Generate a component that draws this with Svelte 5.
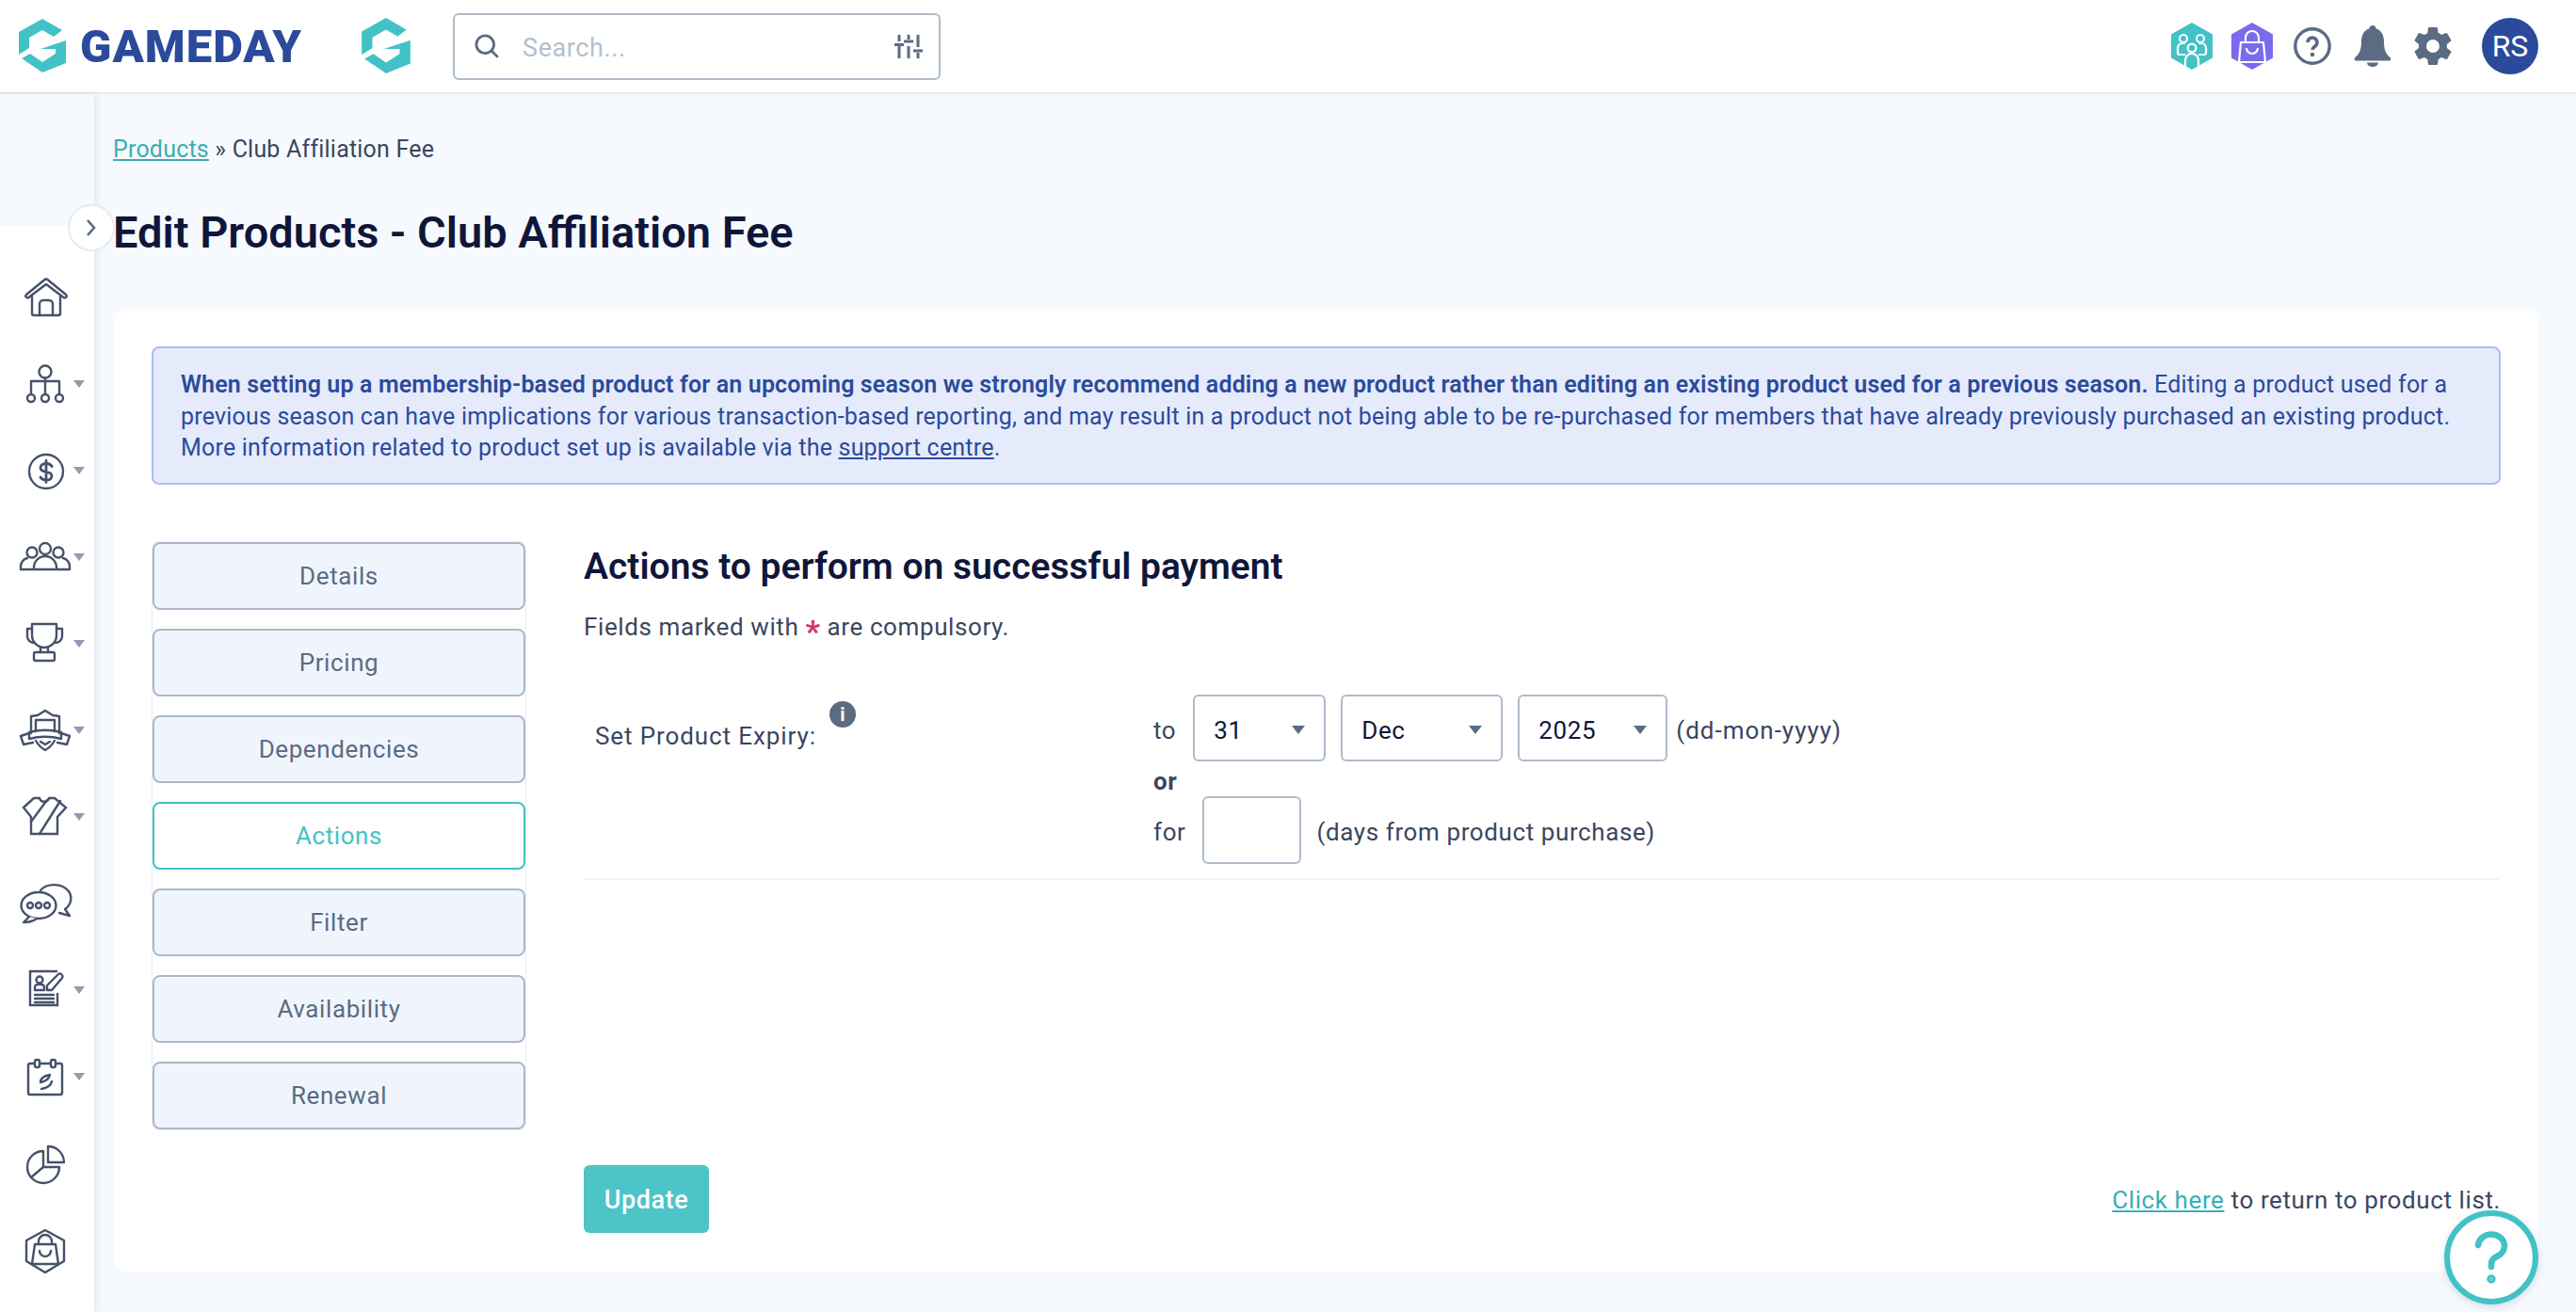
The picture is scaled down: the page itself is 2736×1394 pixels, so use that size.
<script>
  const tabs = ["Details", "Pricing", "Dependencies", "Actions", "Filter", "Availability", "Renewal"];
  const active = "Actions";

  const navItems = [
    { name: "home", caret: false },
    { name: "org", caret: true },
    { name: "money", caret: true },
    { name: "people", caret: true },
    { name: "trophy", caret: true },
    { name: "shield", caret: true },
    { name: "shirt", caret: true },
    { name: "chat", caret: false },
    { name: "form", caret: true },
    { name: "calendar", caret: true },
    { name: "pie", caret: false },
    { name: "bag", caret: false }
  ];
</script>

{#snippet logoMark()}
  <path d="M25 0 46 12 37 19 25 12 11 20V31L0 38V14Z" />
  <path d="M50 23V47L25 57 3 42 12 37 25 46 39 37V32H23Z" />
{/snippet}

<div class="page">
  <header class="topbar">
    <div class="brand">
      <svg class="logo" viewBox="0 0 50 58">{@render logoMark()}</svg>
      <span class="wordmark">GAMEDAY</span>
    </div>
    <svg class="logo small" viewBox="0 0 50 58">{@render logoMark()}</svg>
    <div class="search">
      <svg class="search-icon" viewBox="0 0 24 24" fill="none" stroke="#5b6b82" stroke-width="2.4" stroke-linecap="round"><circle cx="10.5" cy="10.5" r="8" /><path d="M16.500 16.500l5 5" /></svg>
      <span class="placeholder">Search...</span>
      <svg class="filter-icon" viewBox="0 0 30 26" fill="none" stroke="#5b6b82" stroke-width="3"><path d="M5 1v7M5 13v13M15 1v5M15 13v13M25 1v13M25 20v6" /><path d="M0 11.500h10M10 8h10M20 18h10" /></svg>
    </div>
    <div class="top-actions">
      <svg class="hex" viewBox="0 0 44 50">
        <path fill="#42c2c6" d="M22 0 L44 12.500 V37.500 L22 50 L0 37.500 V12.500 Z" />
        <g fill="none" stroke="#fff" stroke-width="2.200">
          <circle cx="13" cy="17" r="4" /><circle cx="31" cy="17" r="4" /><circle cx="22" cy="27" r="4.400" />
          <path d="M15 34H9a2 2 0 0 1-2-2v-5a5 5 0 0 1 5-5h3M29 34h6a2 2 0 0 0 2-2v-5a5 5 0 0 0-5-5h-3M15 50V40a7 7 0 0 1 14 0v10" />
        </g>
      </svg>
      <svg class="hex" viewBox="0 0 44 50">
        <path fill="#7b69ee" d="M22 0 L44 12.500 V37.500 L22 50 L0 37.500 V12.500 Z" />
        <g fill="none" stroke="#fff" stroke-width="2.200">
          <path d="M10 21h24l2 21H8Z" /><path d="M15 21v-5a7 7 0 0 1 14 0v5" /><path d="M16 27a6 6 0 0 0 12 0" />
        </g>
      </svg>
      <svg class="question" viewBox="0 0 40 40">
        <circle cx="20" cy="20" r="18.200" fill="none" stroke="#5b6b82" stroke-width="3.400" />
        <path d="M15 16a5 5 0 1 1 8 4c-2 1.500-3 2-3 4" fill="none" stroke="#5b6b82" stroke-width="3.600" />
        <circle cx="20" cy="29" r="2.300" fill="#5b6b82" />
      </svg>
      <svg class="bell" viewBox="0 0 40 44" fill="#5b6b82">
        <circle cx="20" cy="3.500" r="3.500" />
        <path d="M20 3c8 0 12 6 12 14 0 9 2 13 6.500 17 1.500 1.500 1 3.500-1.500 3.500H3c-2.500 0-3-2-1.500-3.500C6 30 8 26 8 17 8 9 12 3 20 3Z" />
        <path d="M14 39.500h12a6 4.500 0 0 1-12 0Z" />
      </svg>
      <svg class="gear" viewBox="0 0 24 24" fill="#5b6b82"><path d="M19.400 13c.04-.33.06-.66.06-1s-.02-.67-.06-1l2.100-1.650c.2-.15.25-.42.13-.64l-2-3.460c-.12-.22-.38-.3-.61-.22l-2.490 1a7.300 7.300 0 0 0-1.690-.98l-.38-2.650A.49.49 0 0 0 14 2h-4c-.25 0-.46.18-.49.42l-.38 2.650c-.61.25-1.170.59-1.690.98l-2.490-1c-.23-.09-.49 0-.61.22l-2 3.460c-.13.22-.07.49.12.64L4.570 11c-.04.33-.07.67-.07 1s.03.67.07 1l-2.110 1.650c-.19.15-.25.42-.12.64l2 3.460c.12.22.38.3.61.22l2.490-1c.52.4 1.080.73 1.690.98l.38 2.650c.03.24.24.42.49.42h4c.25 0 .46-.18.49-.42l.38-2.650c.61-.25 1.170-.59 1.690-.98l2.490 1c.23.09.49 0 .61-.22l2-3.460c.12-.22.07-.49-.12-.64L19.400 13ZM12 15.500a3.500 3.500 0 1 1 0-7 3.500 3.500 0 0 1 0 7Z" /></svg>
      <div class="avatar">RS</div>
    </div>
  </header>

  <div class="body">
    <aside class="sidebar">
      <div class="sidebar-top">
        <button class="toggle" aria-label="Expand menu">
          <svg viewBox="0 0 12 20" fill="none" stroke="#5b6b82" stroke-width="2.600"><path d="M2 2l7 8-7 8" /></svg>
        </button>
      </div>
      <nav class="nav">
        {#each navItems as item}
          <div class="nav-item">
            <svg class="nav-icon" viewBox="0 0 48 48" fill="none" stroke="#46526a" stroke-width="2.400" stroke-linejoin="round" stroke-linecap="round">
              {#if item.name === "home"}
                <g transform="translate(1 0)">
                  <path d="M3 21 22 5.500a3 3 0 0 1 4 0L45 21c2 2-.500 4.500-2.500 3L24 10 5.500 24c-2 1.500-4.500-1-2.500-3Z" />
                  <path d="M9 23v18a2 2 0 0 0 2 2h26a2 2 0 0 0 2-2V23" />
                  <path d="M17 43V31a4 4 0 0 1 4-4h6a4 4 0 0 1 4 4v12" />
                </g>
              {:else if item.name === "org"}
                <circle cx="24" cy="11" r="6.500" /><path d="M24 18v17M9 35V21h30v14" />
                <circle cx="9" cy="39" r="4" /><circle cx="24" cy="39" r="4" /><circle cx="39" cy="39" r="4" />
              {:else if item.name === "money"}
                <circle cx="25" cy="25" r="18" />
                <path d="M31 19.500c-1-2-3.500-3-6-3-3.500 0-6 1.800-6 4.500s2.500 3.800 6 4.300 6 1.700 6 4.400-2.500 4.300-6 4.300c-2.500 0-5-1-6-3M25 13.500v23" stroke-width="2.800" />
              {:else if item.name === "people"}
                <circle cx="10" cy="19" r="5.500" /><circle cx="24" cy="15" r="6" /><circle cx="38" cy="19" r="5.500" />
                <path d="M-2 37v-3a9 9 0 0 1 7-9M50 37v-3a9 9 0 0 0-7-9M12 37v-2a12 12 0 0 1 24 0v2M-2 37h52" />
              {:else if item.name === "trophy"}
                <path d="M10 3h26v12a13 13 0 0 1-26 0Z" />
                <path d="M10 8H5v8a7 7 0 0 0 7 7M36 8h6v8a7 7 0 0 1-7 7M19 28v5M27 28v5" />
                <rect x="12" y="33" width="22" height="9" rx="2" />
              {:else if item.name === "shield"}
                <path d="M9 27V9l7-1 8-5 8 5 7 1v18" /><path d="M14 25V13h20v12" />
                <path d="M7 26c11-3 23-3 34 0v7c-11-3-23-3-34 0Z" />
                <path d="M7 27l-9 3 3 9 10-2M41 27l9 3-3 9-10-2M14 35c3 5 6 8 10 10 4-2 7-5 10-10M19 36l5 3 5-3" />
              {:else if item.name === "shirt"}
                <path d="M12 4 1 14l8 10v18h28V24l9-10L34 4h-6c-1 5-9 5-10 0Z" stroke-linejoin="miter" />
                <path d="M9 29 26 6M18 42 40 7" />
              {:else if item.name === "chat"}
                <path d="M19 10C26 2 42 2 49 11c4 6 3 14-4 19l5 7-11-3" />
                <ellipse cx="17" cy="26" rx="18.500" ry="14" />
                <path d="M7 38 1 44c5 0 10-1 14-4" fill="#fff" />
                <circle cx="8" cy="26" r="3" /><circle cx="17" cy="26" r="3" /><circle cx="26" cy="26" r="3" />
              {:else if item.name === "form"}
                <path d="M36 4H8v36h29V28" stroke-linejoin="miter" />
                <circle cx="18" cy="13" r="3.500" /><path d="M13 24v-3a3 3 0 0 1 3-3h4a3 3 0 0 1 3 3v3Z" />
                <path d="M13 29h20M13 33h20M13 37h20" />
                <path d="M26 24v-5L38 7c2-2 6 2 4 4L31 24Z" />
              {:else if item.name === "calendar"}
                <rect x="6" y="10" width="36" height="33" rx="2" />
                <rect x="13" y="6" width="5" height="8" rx="2" fill="#fff" /><rect x="30" y="6" width="5" height="8" rx="2" fill="#fff" />
                <path d="M19 30c0-4 4-7 10-8-1 4-4 7-10 8ZM31 29c-1 5-5 7-11 8" />
              {:else if item.name === "pie"}
                <path d="M22 11a17 17 0 1 0 17 17H22Z" /><path d="M22 28 9 39" />
                <path d="M27 6v17h17A17 17 0 0 0 27 6Z" />
              {:else}
                <path d="M24 3 44 14v22L24 48 4 36V14Z" />
                <path d="M13 18h22l3 21H10Z" /><path d="M17 18v-3a7 7 0 0 1 14 0v3" /><path d="M18 25a6 6 0 0 0 12 0" />
              {/if}
            </svg>
            {#if item.caret}<span class="caret"></span>{/if}
          </div>
        {/each}
      </nav>
    </aside>

    <main class="main">
      <div class="crumbs"><a href="#products">Products</a> » Club Affiliation Fee</div>
      <h1>Edit Products - Club Affiliation Fee</h1>

      <section class="card">
        <div class="notice">
          <strong>When setting up a membership-based product for an upcoming season we strongly recommend adding a new product rather than editing an existing product used for a previous season.</strong>
          Editing a product used for a previous season can have implications for various transaction-based reporting, and may result in a product not being able to be re-purchased for members that have already previously purchased an existing product. More information related to product set up is available via the <a href="#support">support centre</a>.
        </div>

        <div class="columns">
          <div class="tabs">
            {#each tabs as tab}
              <button class="tab" class:active={tab === active}>{tab}</button>
            {/each}
          </div>

          <div class="panel">
            <h2>Actions to perform on successful payment</h2>
            <p class="required">Fields marked with <span class="star">*</span> are compulsory.</p>

            <div class="field">
              <div class="field-label">
                <span class="label-text">Set Product Expiry:</span>
                <span class="info">i</span>
              </div>
              <div class="field-body">
                <div class="line">
                  <span>to</span>
                  <div class="select s-day">31<span class="arrow"></span></div>
                  <div class="select s-mon">Dec<span class="arrow"></span></div>
                  <div class="select s-year">2025<span class="arrow"></span></div>
                  <span class="format">(dd-mon-yyyy)</span>
                </div>
                <div class="or">or</div>
                <div class="line">
                  <span>for</span>
                  <div class="days"></div>
                  <span>(days from product purchase)</span>
                </div>
              </div>
            </div>

            <div class="footer">
              <button class="update">Update</button>
              <div class="back"><a href="#list">Click here</a> to return to product list.</div>
            </div>
          </div>
        </div>
      </section>
    </main>
  </div>

  <button class="help" aria-label="Help">
    <svg viewBox="0 0 36 56" fill="none" stroke="#42c2c6" stroke-width="6.500" stroke-linecap="round"><path d="M4 15C5 8 11 3.500 18 3.500c8 0 14 5.500 14 12.500 0 6-4 9-8 11-3 1.500-6 3-6 8v3" /><circle cx="18" cy="51" r="1.500" fill="#42c2c6" /></svg>
  </button>
</div>

<style>
  :global(body) {
    margin: 0;
    background: #f6f9fd;
  }

  .page {
    width: 2736px;
    height: 1394px;
    overflow: hidden;
    position: relative;
    font-family: Roboto, "Open Sans", sans-serif;
    font-size: 26px;
    letter-spacing: 0.6px;
    color: #3b4660;
  }

  .topbar {
    height: 98px;
    background: #fff;
    border-bottom: 2px solid #e6ebf4;
    display: flex;
    align-items: center;
    padding-left: 20px;
    padding-right: 40px;
  }

  .brand {
    display: flex;
    align-items: center;
    width: 363px;
    gap: 15px;
  }

  .logo {
    width: 50px;
    height: 58px;
    fill: #42c2c6;
    flex: none;
  }

  .logo.small {
    width: 54px;
    height: 60px;
    margin-right: 44px;
  }

  .wordmark {
    font-weight: 900;
    font-size: 49px;
    line-height: 1;
    color: #2b4a9b;
    letter-spacing: 1px;
  }

  .search {
    width: 518px;
    height: 71px;
    box-sizing: border-box;
    border: 2px solid #aebccb;
    border-radius: 6px;
    display: flex;
    align-items: center;
    padding: 0 17px 0 20px;
  }

  .search-icon {
    width: 28px;
    height: 28px;
    margin-right: 24px;
  }

  .placeholder {
    flex: 1;
    color: #b3bfcc;
    font-size: 27px;
    padding-top: 4px;
  }

  .filter-icon {
    width: 30px;
    height: 26px;
  }

  .top-actions {
    margin-left: auto;
    display: flex;
    align-items: center;
    gap: 20px;
  }

  .hex {
    width: 44px;
    height: 50px;
  }

  .question {
    width: 40px;
    height: 40px;
    margin-left: 2px;
  }

  .bell {
    width: 40px;
    height: 44px;
    margin-left: 4px;
  }

  .gear {
    width: 48px;
    height: 48px;
  }

  .avatar {
    width: 60px;
    height: 60px;
    margin-left: 8px;
    border-radius: 50%;
    background: #2b4a9b;
    color: #fff;
    font-size: 32px;
    letter-spacing: 0;
    display: flex;
    align-items: center;
    justify-content: center;
  }

  .body {
    display: flex;
    height: 1294px;
  }

  .sidebar {
    width: 100px;
    flex: none;
    box-shadow: 2px 0 8px rgba(70, 90, 140, 0.13);
    background: #fff;
    position: relative;
  }

  .sidebar-top {
    height: 140px;
    background: #f6f9fd;
    margin-bottom: 30px;
  }

  .toggle {
    position: absolute;
    left: 72px;
    top: 117px;
    width: 50px;
    height: 50px;
    padding: 0;
    border: 2px solid #e6ebf4;
    border-radius: 50%;
    background: #fff;
    display: flex;
    align-items: center;
    justify-content: center;
    z-index: 2;
  }

  .toggle svg {
    width: 12px;
    height: 20px;
  }

  .nav-item {
    height: 92px;
    display: flex;
    align-items: center;
    padding-left: 24px;
    position: relative;
  }

  .nav-icon {
    width: 48px;
    height: 48px;
    overflow: visible;
  }

  .caret {
    position: absolute;
    left: 78px;
    top: 42px;
    border-left: 6px solid transparent;
    border-right: 6px solid transparent;
    border-top: 8px solid #8f9db2;
  }

  .main {
    flex: 1;
    padding: 41px 40px 0 20px;
    min-width: 0;
  }

  .crumbs {
    font-size: 25px;
    letter-spacing: 0.2px;
    line-height: 36px;
    margin-bottom: 36px;
  }

  .crumbs a,
  .back a {
    color: #36b0b5;
  }

  h1 {
    margin: 0 0 47px;
    font-size: 47px;
    line-height: 68px;
    font-weight: 600;
    letter-spacing: 0;
    color: #10163a;
  }

  .card {
    background: #fff;
    border-radius: 14px;
    height: 1023px;
    margin-left: 1px;
    box-sizing: border-box;
    padding: 40px 40px 0 40px;
  }

  .notice {
    background: #e5ebfb;
    border: 2px solid #a9bdf0;
    border-radius: 8px;
    color: #2b4a9b;
    font-size: 25px;
    letter-spacing: 0.2px;
    line-height: 33.500px;
    padding: 22px 29px 20px;
  }

  .notice strong {
    font-weight: 600;
    letter-spacing: 0.14px;
  }

  .notice a {
    color: inherit;
  }

  .columns {
    display: flex;
    gap: 61px;
    margin-top: 61px;
  }

  .tabs {
    width: 398px;
    flex: none;
    box-sizing: border-box;
    display: flex;
    flex-direction: column;
    gap: 20px;
    align-self: flex-start;
    border: 1px solid #e8edf5;
    border-radius: 8px;
    margin-top: -1px;
  }

  .tab {
    height: 72px;
    font: inherit;
    letter-spacing: inherit;
    color: #5b6b82;
    background: #f0f5fd;
    border: 2px solid #aab8c9;
    border-radius: 8px;
    padding: 0;
  }

  .tab.active {
    background: #fff;
    border-color: #42c2c6;
    color: #42c2c6;
  }

  .panel {
    flex: 1;
    min-width: 0;
  }

  h2 {
    margin: 0;
    font-size: 39px;
    line-height: 52px;
    font-weight: 600;
    letter-spacing: 0;
    color: #10163a;
  }

  .required {
    margin: 20px 0 0;
    line-height: 36px;
  }

  .star {
    color: #d6336c;
    font-weight: 700;
    font-size: 34px;
    line-height: 0;
    vertical-align: -8px;
  }

  .field {
    display: flex;
    margin-top: 54px;
    padding-bottom: 15px;
    border-bottom: 2px solid #eff3fa;
    width: 2034px;
  }

  .field-label {
    width: 605px;
    flex: none;
    padding: 26px 0 0 12px;
    display: flex;
    align-items: flex-start;
    gap: 14px;
    line-height: 36px;
    box-sizing: border-box;
  }

  .label-text {
    letter-spacing: 0.9px;
  }

  .info {
    width: 28px;
    height: 28px;
    margin-top: -19px;
    border-radius: 50%;
    background: #5b6b82;
    color: #fff;
    font-size: 20px;
    font-weight: 700;
    line-height: 28px;
    letter-spacing: 0;
    text-align: center;
  }

  .line {
    display: flex;
    align-items: center;
    gap: 16px;
  }

  .line > span {
    padding-top: 5px;
  }

  .line > span:first-child {
    margin-right: 2px;
  }

  .select {
    height: 71px;
    box-sizing: border-box;
    border: 2px solid #aebccb;
    border-radius: 6px;
    background: #fff;
    color: #10163a;
    display: flex;
    align-items: center;
    justify-content: space-between;
    padding: 5px 20px 0;
  }

  .s-day {
    width: 141px;
  }

  .s-mon {
    width: 172px;
  }

  .s-year {
    width: 159px;
  }

  .format {
    margin-left: -7px;
    letter-spacing: 1px;
  }

  .arrow {
    border-left: 7px solid transparent;
    border-right: 7px solid transparent;
    border-top: 9px solid #5b6b82;
  }

  .or {
    font-weight: 700;
    line-height: 36px;
    margin: 3px 0 -2px;
  }

  .days {
    width: 105px;
    height: 72px;
    box-sizing: border-box;
    border: 2px solid #aebccb;
    border-radius: 6px;
  }

  .footer {
    display: flex;
    align-items: center;
    justify-content: space-between;
    width: 2036px;
    margin-top: 303px;
  }

  .update {
    width: 133px;
    height: 72px;
    background: #4dc4c8;
    color: #fff;
    border: 0;
    border-radius: 6px;
    font: inherit;
    letter-spacing: inherit;
    font-weight: 500;
    font-size: 27px;
    padding: 3px 0 0;
  }

  .back {
    padding-top: 3px;
  }

  .help {
    position: absolute;
    left: 2596px;
    top: 1286px;
    width: 100px;
    height: 100px;
    padding: 0;
    box-sizing: border-box;
    border: 6px solid #42c2c6;
    border-radius: 50%;
    background: #fff;
    box-shadow: 0 2px 8px rgba(70, 90, 140, 0.2);
    display: flex;
    align-items: center;
    justify-content: center;
  }

  .help svg {
    width: 36px;
    height: 56px;
  }
</style>
